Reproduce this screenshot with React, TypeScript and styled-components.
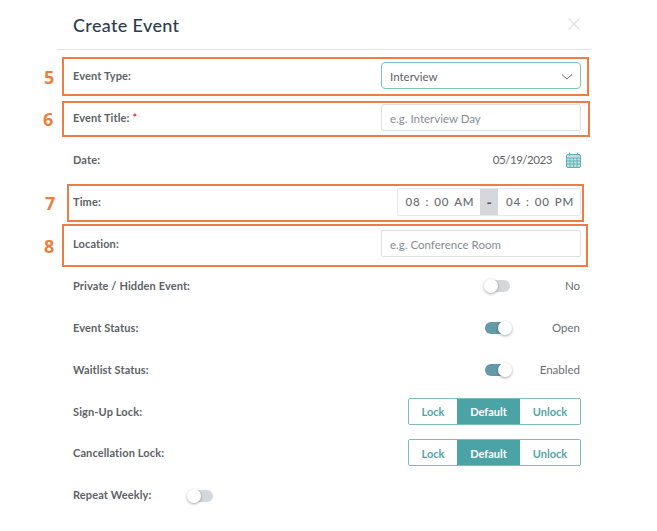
import React from "react";
import styled, { createGlobalStyle } from "styled-components";

const GlobalStyle = createGlobalStyle`
  html, body {
    margin: 0;
    padding: 0;
    background: #fff;
  }
  body {
    font-family: "Lato", "Liberation Sans", sans-serif;
  }
`;

const Page = styled.div`
  position: relative;
  width: 657px;
  height: 531px;
  overflow: hidden;
  padding-left: 57px;
  box-sizing: border-box;
`;

const Dialog = styled.div`
  width: 534px;
`;

const Header = styled.header`
  height: 50px;
  box-sizing: border-box;
  border-bottom: 1px solid #e2e4e6;
  display: flex;
  align-items: center;
  justify-content: space-between;
  padding: 1px 10px 0 16px;
`;

const Title = styled.h2`
  margin: 0;
  font-size: 18px;
  font-weight: 500;
  color: #2b3d50;
  letter-spacing: 0.35px;
`;

const CloseIcon = styled.svg`
  width: 14px;
  height: 14px;
  margin: 0 0 3px;
`;

const Form = styled.div`
  padding: 5px 10px 0 16px;
`;

const Row = styled.div`
  height: 41.9px;
  display: flex;
  align-items: center;
  justify-content: space-between;
`;

const Label = styled.label`
  font-size: 11px;
  font-weight: 700;
  letter-spacing: 0.12px;
  color: #5d6267;
`;

const Required = styled.span`
  color: #e0313c;
  margin-left: 3px;
`;

const Select = styled.div`
  width: 200px;
  height: 27px;
  box-sizing: border-box;
  border: 1px solid #7cc4c4;
  border-radius: 4px;
  padding: 2px 7px 0 8px;
  display: flex;
  align-items: center;
  justify-content: space-between;
  font-size: 11.5px;
  color: #5e6368;
`;

const Chevron = styled.svg`
  width: 12px;
  height: 8px;
`;

const Input = styled.div`
  width: 200px;
  height: 27px;
  box-sizing: border-box;
  border: 1px solid #dde0e3;
  border-radius: 2px;
  padding: 2px 8px 0;
  display: flex;
  align-items: center;
  font-size: 11.5px;
  color: #868d94;
`;

const DateValue = styled.div`
  display: flex;
  align-items: center;
  gap: 14px;
  font-size: 11.5px;
  letter-spacing: -0.45px;
  color: #5e6368;
`;

const CalendarIcon = styled.svg`
  width: 15px;
  height: 16px;
`;

const TimeBox = styled.div`
  width: 184px;
  height: 28px;
  box-sizing: border-box;
  border: 1px solid #e6e8ea;
  border-radius: 2px;
  display: flex;
  align-items: stretch;
  font-size: 11.5px;
  font-weight: 500;
  color: #666b70;
`;

const TimeField = styled.div<{ $width: number }>`
  width: ${(p) => p.$width}px;
  padding-left: 2px;
  box-sizing: border-box;
  display: flex;
  align-items: center;
  justify-content: center;
  gap: 5px;
  letter-spacing: 0.8px;
`;

const TimeDash = styled.div`
  width: 18px;
  background: #d4d8dd;
  display: flex;
  align-items: center;
  justify-content: center;
  font-size: 14px;
  font-weight: 900;
  color: #4d5358;
`;

const ToggleGroup = styled.div`
  width: 96px;
  padding-right: 1px;
  box-sizing: border-box;
  display: flex;
  align-items: center;
  justify-content: space-between;
  font-size: 11.5px;
  color: #6a6f74;
`;

const ToggleText = styled.span`
  padding-top: 1px;
`;

const Track = styled.span<{ $on?: boolean }>`
  position: relative;
  display: inline-block;
  width: 25px;
  height: 12px;
  margin-top: 2px;
  border-radius: 6px;
  background: ${(p) => (p.$on ? "#6499a9" : "#d3d8dd")};
`;

const Knob = styled.span<{ $on?: boolean }>`
  position: absolute;
  top: -1px;
  left: ${(p) => (p.$on ? "13px" : "-1px")};
  width: 14px;
  height: 14px;
  border-radius: 50%;
  background: #fff;
  box-shadow: 0 1px 3px rgba(0, 0, 0, 0.35);
`;

const Segments = styled.div`
  width: 173px;
  height: 27px;
  box-sizing: border-box;
  border: 1px solid #7dbcbd;
  border-radius: 2px;
  display: flex;
  overflow: hidden;
`;

const Segment = styled.div<{ $active?: boolean; $width: number }>`
  width: ${(p) => p.$width}px;
  padding-top: 1px;
  box-sizing: border-box;
  display: flex;
  align-items: center;
  justify-content: center;
  font-size: 11px;
  font-weight: 700;
  color: ${(p) => (p.$active ? "#fff" : "#52a5a8")};
  background: ${(p) => (p.$active ? "#4ba3a6" : "#fff")};
`;

const RepeatGroup = styled.div`
  display: flex;
  align-items: center;
  gap: 37px;
`;

const Callout = styled.div<{ $top: number; $left: number; $width: number; $height: number }>`
  position: absolute;
  top: ${(p) => p.$top}px;
  left: ${(p) => p.$left}px;
  width: ${(p) => p.$width}px;
  height: ${(p) => p.$height}px;
  box-sizing: border-box;
  border: 2px solid #ec7d44;
`;

const CalloutNumber = styled.span<{ $left: number }>`
  position: absolute;
  top: 50%;
  left: ${(p) => p.$left}px;
  transform: translateY(-50%);
  font-family: "Open Sans", sans-serif;
  font-size: 18px;
  font-weight: 700;
  line-height: 1;
  color: #e9803f;
`;

const Toggle = ({ on }: { on?: boolean }) => (
  <Track $on={on}>
    <Knob $on={on} />
  </Track>
);

const LockButtons = () => (
  <Segments>
    <Segment $width={48}>Lock</Segment>
    <Segment $width={63} $active>
      Default
    </Segment>
    <Segment $width={60}>Unlock</Segment>
  </Segments>
);

const CALLOUTS = [
  { n: 5, top: 57, left: 62, width: 527, height: 39, numberLeft: -20 },
  { n: 6, top: 101, left: 62, width: 528, height: 36, numberLeft: -21 },
  { n: 7, top: 184, left: 67, width: 517, height: 38, numberLeft: -24 },
  { n: 8, top: 224, left: 62, width: 526, height: 43, numberLeft: -20 },
];

export default function App() {
  return (
    <Page>
      <GlobalStyle />
      <Dialog>
        <Header>
          <Title>Create Event</Title>
          <CloseIcon viewBox="0 0 14 14" fill="none" stroke="#e0e3e5" strokeWidth="1.2">
            <path d="M1.5 1.5l11 11M12.5 1.5l-11 11" />
          </CloseIcon>
        </Header>
        <Form>
          <Row>
            <Label>Event Type:</Label>
            <Select>
              Interview
              <Chevron viewBox="0 0 12 8" fill="none" stroke="#6a7076" strokeWidth="1">
                <path d="M1 1.5l5 4.5 5-4.5" />
              </Chevron>
            </Select>
          </Row>
          <Row>
            <Label>
              Event Title:<Required>*</Required>
            </Label>
            <Input>e.g. Interview Day</Input>
          </Row>
          <Row>
            <Label>Date:</Label>
            <DateValue>
              05/19/2023
              <CalendarIcon viewBox="0 0 15 16" fill="none">
                <rect x="0.5" y="2.5" width="14" height="13" rx="1.5" fill="#bfe0e0" stroke="#5fb0b2" />
                <path d="M0.5 6h14M0.5 9h14M0.5 12h14M4 6v9.5M7.5 6v9.5M11 6v9.5" stroke="#5fb0b2" strokeWidth="0.9" />
                <path d="M3.5 0.5v3M11.5 0.5v3" stroke="#5fb0b2" strokeWidth="1.2" />
              </CalendarIcon>
            </DateValue>
          </Row>
          <Row>
            <Label>Time:</Label>
            <TimeBox>
              <TimeField $width={82}>
                <span>08</span>
                <span>:</span>
                <span>00</span>
                <span>AM</span>
              </TimeField>
              <TimeDash>-</TimeDash>
              <TimeField $width={82}>
                <span>04</span>
                <span>:</span>
                <span>00</span>
                <span>PM</span>
              </TimeField>
            </TimeBox>
          </Row>
          <Row>
            <Label>Location:</Label>
            <Input>e.g. Conference Room</Input>
          </Row>
          <Row>
            <Label>Private / Hidden Event:</Label>
            <ToggleGroup>
              <Toggle />
              <ToggleText>No</ToggleText>
            </ToggleGroup>
          </Row>
          <Row>
            <Label>Event Status:</Label>
            <ToggleGroup>
              <Toggle on />
              <ToggleText>Open</ToggleText>
            </ToggleGroup>
          </Row>
          <Row>
            <Label>Waitlist Status:</Label>
            <ToggleGroup>
              <Toggle on />
              <ToggleText>Enabled</ToggleText>
            </ToggleGroup>
          </Row>
          <Row>
            <Label>Sign-Up Lock:</Label>
            <LockButtons />
          </Row>
          <Row>
            <Label>Cancellation Lock:</Label>
            <LockButtons />
          </Row>
          <Row>
            <RepeatGroup>
              <Label>Repeat Weekly:</Label>
              <Toggle />
            </RepeatGroup>
          </Row>
        </Form>
      </Dialog>
      {CALLOUTS.map((c) => (
        <Callout key={c.n} $top={c.top} $left={c.left} $width={c.width} $height={c.height}>
          <CalloutNumber $left={c.numberLeft}>{c.n}</CalloutNumber>
        </Callout>
      ))}
    </Page>
  );
}
